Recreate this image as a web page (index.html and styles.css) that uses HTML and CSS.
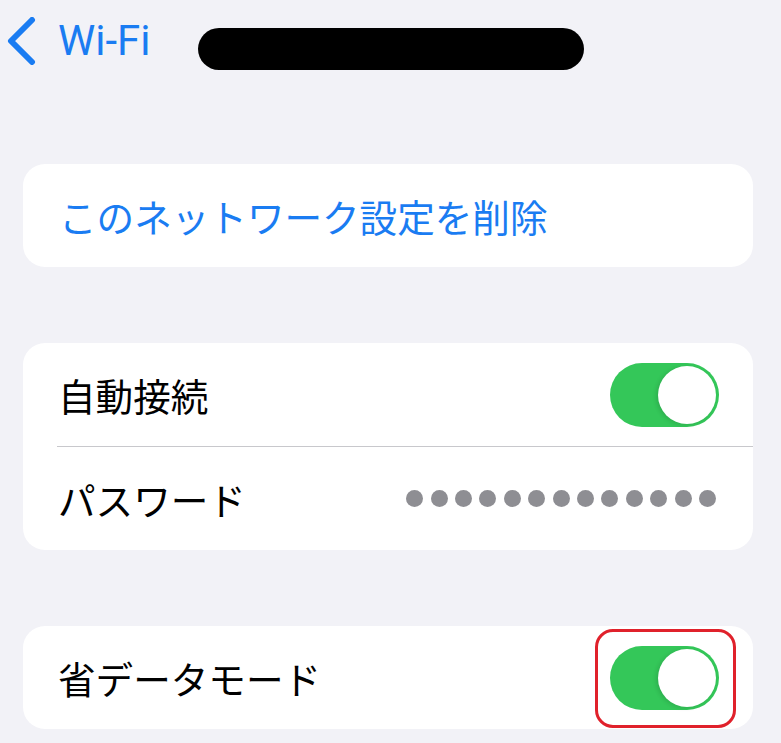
FILE: index.html
```html
<!DOCTYPE html>
<html lang="ja">
<head>
<meta charset="utf-8">
<title>Wi-Fi</title>
<link rel="stylesheet" href="styles.css">
</head>
<body>
<div class="nav">
  <svg class="chev" width="30" height="48" viewBox="0 0 30 48">
    <path d="M26 3 L5 24 L26 45" fill="none" stroke="#1a7cf2" stroke-width="6" stroke-linecap="round" stroke-linejoin="round"/>
  </svg>
  <span class="back">Wi-Fi</span>
  <span class="redact"></span>
</div>

<div class="card first">
  <div class="row"><span class="link">このネットワーク設定を削除</span></div>
</div>

<div class="card">
  <div class="row">
    <span class="label">自動接続</span>
    <span class="toggle"><span class="knob"></span></span>
  </div>
  <div class="sep"></div>
  <div class="row pw">
    <span class="label">パスワード</span>
    <span class="dots">
      <i></i><i></i><i></i><i></i><i></i><i></i><i></i><i></i><i></i><i></i><i></i><i></i><i></i>
    </span>
  </div>
</div>

<div class="card">
  <div class="row">
    <span class="label">省データモード</span>
    <span class="toggle marked"><span class="knob"></span><span class="mark"></span></span>
  </div>
</div>
</body>
</html>
```
FILE: styles.css
```css
html, body {
  margin: 0;
  padding: 0;
}
body {
  background: #f2f2f7;
  font-family: "Noto Sans CJK JP", "Noto Sans", sans-serif;
  width: 781px;
  height: 743px;
  overflow: hidden;
}
.nav {
  height: 82px;
  display: flex;
  align-items: center;
  padding-left: 6px;
}
.chev {
  display: block;
  flex: none;
}
.back {
  font-family: Roboto, "Noto Sans", sans-serif;
  font-size: 42px;
  line-height: 1;
  color: #1a7cf2;
  margin-left: 22px;
}
.redact {
  display: block;
  width: 386px;
  height: 42px;
  border-radius: 21px;
  background: #000;
  margin-left: 47px;
  margin-top: 16px;
}
.card {
  margin: 76px 0 0 23px;
  width: 730px;
  background: #fff;
  border-radius: 22px;
}
.card.first {
  margin-top: 82px;
}
.row {
  position: relative;
  height: 103px;
  display: flex;
  align-items: center;
  justify-content: space-between;
  padding: 0 34px 0 35px;
}
.row.pw {
  padding-right: 37px;
}
.link, .label {
  font-size: 37.6px;
  line-height: 1;
  color: #000;
}
.link {
  color: #1a7cf2;
  padding-left: 1px;
}
.sep {
  height: 1px;
  background: #c8c8cc;
  margin-left: 34px;
}
.toggle {
  position: relative;
  display: block;
  width: 109px;
  height: 64px;
  border-radius: 32px;
  background: #34c759;
}
.knob {
  position: absolute;
  top: 3px;
  right: 3px;
  width: 58px;
  height: 58px;
  border-radius: 50%;
  background: #fff;
  box-shadow: -2px 1px 4px rgba(0, 0, 0, 0.12);
}
.mark {
  position: absolute;
  left: -15px;
  top: -17px;
  right: -17px;
  bottom: -18px;
  border: 3px solid #e0212b;
  border-radius: 18px;
}
.dots {
  display: flex;
  gap: 7.4px;
}
.dots i {
  display: block;
  width: 17px;
  height: 17px;
  border-radius: 50%;
  background: #8e8e93;
}
```
